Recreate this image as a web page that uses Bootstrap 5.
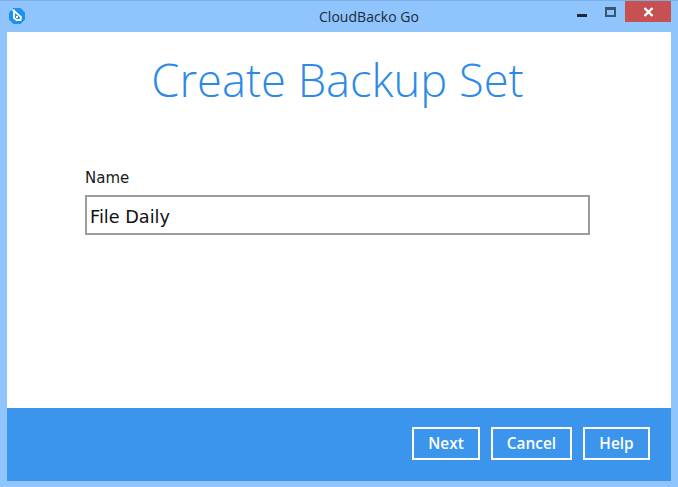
<!DOCTYPE html>
<html lang="en">
<head>
<meta charset="utf-8">
<title>CloudBacko Go</title>
<link href="https://cdn.jsdelivr.net/npm/bootstrap@5.3.0/dist/css/bootstrap.min.css" rel="stylesheet">
<style>
html,body{height:487px;overflow:hidden;margin:0;background:#8fc5fc}
.win-frame{width:678px;height:487px;padding:0 7px 6px;background:#8fc5fc;border-top:1px solid #7aaee6}
.win-bar{height:31px;position:relative}
.win-title{font:14px/1 "Open Sans",sans-serif;color:#1c2a3a;padding:9px 0 0 60px;width:100%;text-align:center;letter-spacing:.05px}
.win-logo{position:absolute;left:1px;top:6px}
.win-ctrls{position:absolute;right:0;top:0;height:21px;display:flex;align-items:flex-start}
.ctrl-min{width:10px;height:3px;background:#1b2a3c;margin:13px 18px 0 0}
.ctrl-max{width:11px;height:10px;border:2px solid #3a566f;border-top-width:3px;margin:6px 9px 0 0;background:#8fc5fc}
.ctrl-close{width:46px;height:21px;background:#c75050;display:flex;align-items:center;justify-content:center}
.win-body{height:449px;background:#fff;border-top:1px solid #fff}
.main-pane{height:375px;flex:none;padding:0 81px 0 78px}
.page-title{font:300 45.3px/1 "Open Sans",sans-serif;color:#2b8ae8;text-align:center;margin:0;padding-top:24px;height:138px}
.name-label{font:15px/1 "DejaVu Sans",sans-serif;color:#1a1a1a;margin:0 0 9px;display:block}
.name-input{display:block;width:505px;height:40px;border:2px solid #9c9c9c;border-radius:0;padding:3px 3px 0;font:17.7px "DejaVu Sans",sans-serif;color:#111;background:#fff;outline:0}
.foot-bar{height:73px;flex:none;background:#3b95ed;display:flex;justify-content:flex-end;align-items:flex-start;gap:11px;padding:19px 21px 0 0}
.foot-btn{height:33px;border:2px solid #fff;border-radius:0;background:transparent;color:#fff;font:600 15.4px/1 "Open Sans",sans-serif;padding:0;box-shadow:none}
.foot-btn:hover{background:transparent;color:#fff;border-color:#fff}
.b-next{width:68px}.b-cancel{width:81px}.b-help{width:67px}
</style>
</head>
<body>
<div class="win-frame">
  <div class="win-bar d-flex">
    <svg class="win-logo" width="18" height="18" viewBox="0 0 18 18" aria-hidden="true">
      <path d="M5.500 1h7l4.500 4.500v7L12.500 17h-7L1 12.500v-7z" fill="#1e90f0"/>
      <path d="M5.500 3.500l7.500 6.500-.5 3H8.500L6 11V3.500z" fill="none" stroke="#fff" stroke-width="1.800"/>
      <path d="M8 9h2v2H8z" fill="#fff"/>
    </svg>
    <div class="win-title">CloudBacko Go</div>
    <div class="win-ctrls">
      <div class="ctrl-min"></div>
      <div class="ctrl-max"></div>
      <div class="ctrl-close">
        <svg width="11" height="10" viewBox="0 0 11 10" aria-hidden="true"><path d="M1.500 1l8 8M9.500 1l-8 8" stroke="#fff" stroke-width="2.400"/></svg>
      </div>
    </div>
  </div>
  <div class="win-body d-flex flex-column">
    <div class="main-pane">
      <h1 class="page-title">Create Backup Set</h1>
      <label class="name-label" for="nm">Name</label>
      <input id="nm" class="name-input" type="text" value="File Daily">
    </div>
    <div class="foot-bar">
      <button type="button" class="btn foot-btn b-next">Next</button>
      <button type="button" class="btn foot-btn b-cancel">Cancel</button>
      <button type="button" class="btn foot-btn b-help">Help</button>
    </div>
  </div>
</div>
<script src="https://cdn.jsdelivr.net/npm/bootstrap@5.3.0/dist/js/bootstrap.bundle.min.js"></script>
</body>
</html>
